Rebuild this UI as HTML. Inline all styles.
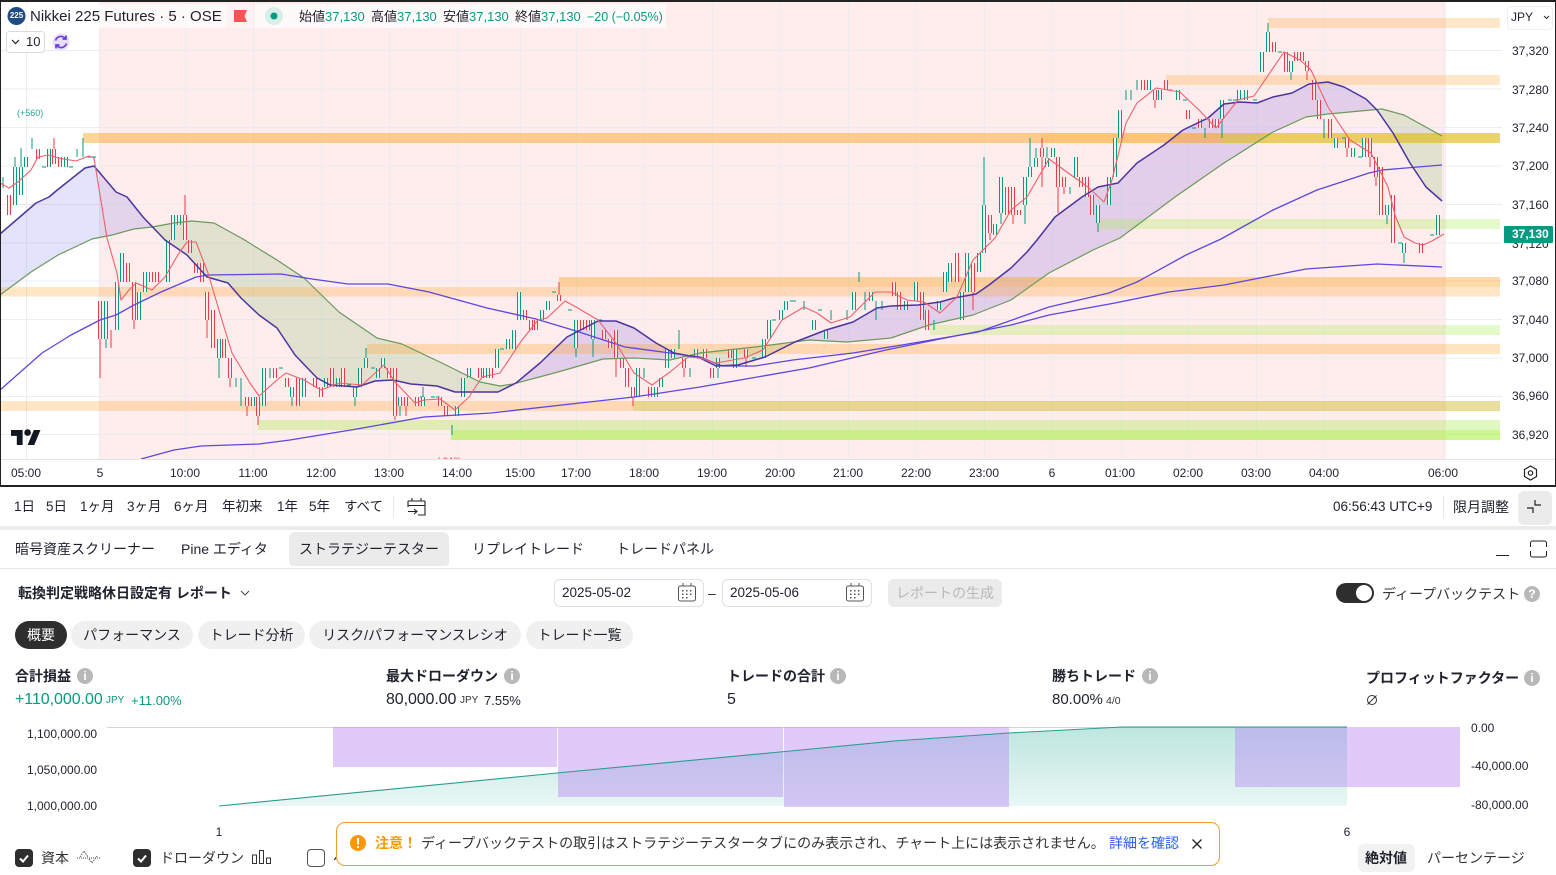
<!DOCTYPE html>
<html lang="ja"><head><meta charset="utf-8"><title>Nikkei 225 Futures</title>
<style>
html,body{margin:0;padding:0;background:#fff}
body{width:1556px;height:875px;overflow:hidden;position:relative;font-family:"Liberation Sans","Noto Sans CJK JP",sans-serif;color:#1e222d}
.t{position:absolute;white-space:nowrap;line-height:16px;height:16px}
.c{transform:translateX(-50%)}
.s14{font-size:14px}.s13{font-size:13px}.s12{font-size:12px}.s135{font-size:13.5px}
.g{color:#089981}
.b{font-weight:700}
.box{position:absolute;box-sizing:border-box}
.pill{position:absolute;top:621px;height:28px;border-radius:14px;background:#f0f0f0;font-size:14px;line-height:28px;text-align:center;white-space:nowrap}
.i{position:absolute;width:16px;height:16px;border-radius:50%;background:#b8b8b8;color:#fff;font-size:12px;line-height:16px;text-align:center;font-weight:700}
svg{position:absolute;overflow:visible}
</style></head><body>

<svg style="left:0;top:0" width="1556" height="487" viewBox="0 0 1556 487">
<defs>
<clipPath id="ch"><rect x="0" y="0" width="1556" height="459"/></clipPath>
<clipPath id="l1"><rect x="0" y="0" width="153" height="459"/></clipPath>
<clipPath id="l2"><rect x="515" y="0" width="175" height="459"/></clipPath>
<clipPath id="l3"><rect x="795" y="0" width="583" height="459"/></clipPath>
<clipPath id="k1"><rect x="153" y="0" width="362" height="459"/></clipPath>
<clipPath id="k2"><rect x="690" y="0" width="105" height="459"/></clipPath>
<clipPath id="k3"><rect x="1378" y="0" width="66" height="459"/></clipPath>
<polygon id="fa" points="0,234 36,203 49,197 56,191 85,168 94,166 116,192 127,197 143,217 165,240 187,255 207,277 228,283 241,298 259,315 277,328 295,355 317,378 330,385 357,387 375,381 393,380 411,384 437,386 455,392 498,392 516,383 540,363 567,337 598,321 616,321 634,328 656,343 674,353 700,358 716,366 738,365 765,357 795,342 826,330 853,322 877,308 891,306 918,305 940,302 954,298 976,294 989,285 1011,268 1027,252 1037,240 1055,217 1082,197 1098,187 1118,183 1137,163 1164,145 1183,130 1208,118 1224,104 1240,102 1257,103 1273,97 1292,93 1309,84 1328,82 1344,87 1366,99 1377,110 1393,133 1410,163 1426,187 1442,201 1442,136 1404,115 1382,109 1328,114 1306,117 1273,132 1224,163 1175,197 1120,238 1093,250 1049,273 1011,300 973,315 929,325 891,338 847,342 809,340 755,347 700,353 670,360 634,358 603,359 558,372 513,384 500,386 480,382 446,365 402,344 377,338 339,312 304,278 277,260 243,239 214,223 192,221 174,223 152,227 134,229 112,235 92,239 58,255 31,272 0,295"/>
<path id="rb" d="M9 195V215M38 149V159M54 149V164M60 157V167M100 301V339M128 263V282M134 282V320M151 272V282M157 272V282M185 215V240M190 240V253M196 263V273M202 263V282M207 292V320M213 310V348M224 339V358M230 358V378M247 397V406M258 397V416M275 368V378M287 378V387M298 378V406M315 378V387M321 387V397M332 368V387M343 368V387M389 368V378M395 368V416M406 397V406M417 397V406M440 397V406M446 406V416M480 368V378M491 368V378M525 310V320M531 320V330M536 320V330M559 295V301M582 320V330M588 320V330M604 330V339M610 339V348M616 330V358M622 358V368M627 368V387M633 387V397M650 387V397M684 358V368M705 349V358M712 368V378M730 349V358M746 349V358M894 282V296M899 292V310M922 292V320M927 310V330M957 253V282M973 263V292M990 215V233M1007 187V215M1013 187V215M1019 210V215M1042 148V157M1058 157V187M1064 177V187M1081 177V187M1087 177V197M1092 195V215M1143 80V90M1155 90V100M1166 80V90M1188 110V119M1200 119V128M1211 119V128M1217 119V128M1274 42V52M1286 52V72M1296 52V61M1302 52V61M1307 61V71M1314 80V100M1319 100V119M1330 119V138M1347 138V148M1370 138V157M1376 157V177M1381 167V215M1393 195V243M1421 243V253"/>
<path id="gb" d="M15 167V205M21 167V195M26 157V167M49 149V167M66 157V167M106 301V339M117 282V330M122 253V282M139 292V320M145 272V292M168 240V282M173 215V240M179 215V225M219 339V358M253 397V406M264 368V406M292 387V397M304 378V397M326 378V387M338 378V387M355 387V397M360 368V387M366 358V368M378 368V378M383 358V368M400 397V406M423 397V406M457 406V416M463 378V397M469 368V378M485 368V378M497 349V368M508 339V349M514 330V349M519 292V320M542 310V320M548 301V310M576 320V348M593 320V339M638 368V397M656 387V397M661 378V387M667 349V368M673 349V358M696 349V358M718 358V368M735 349V368M764 339V358M769 320V339M781 310V320M786 301V310M814 320V330M826 330V339M854 292V310M871 292V301M906 301V310M916 282V301M939 301V310M945 272V292M950 263V282M962 292V320M967 253V292M979 253V272M984 205V253M995 224V235M1001 177V213M1025 177V205M1030 167V177M1036 158V167M1047 158V167M1053 148V157M1076 157V177M1098 205V223M1109 177V205M1115 138V177M1120 110V138M1149 80V90M1160 90V100M1178 90V100M1222 100V119M1239 90V100M1246 90V100M1262 52V72M1268 32V52M1291 61V72M1336 138V148M1353 148V157M1364 138V157M1387 205V215M1404 243V253M1438 215V235"/>
</defs>

<!-- background -->
<rect x="0" y="0" width="1556" height="487" fill="#fff"/>
<rect x="99" y="2" width="1347" height="457" fill="#ffecec"/>

<!-- grid -->
<path d="M0 50.5H1502M0 89H1502M0 127.5H1502M0 166H1502M0 204.5H1502M0 243H1502M0 281H1502M0 319.5H1502M0 358H1502M0 396.5H1502M0 434.5H1502M26.5 2V459M99.5 2V459M185.5 2V459M253.5 2V459M321.5 2V459M389.5 2V459M457.5 2V459M520.5 2V459M576.5 2V459M644.5 2V459M712.5 2V459M780.5 2V459M848.5 2V459M916.5 2V459M984.5 2V459M1052.5 2V459M1121.5 2V459M1188.5 2V459M1256.5 2V459M1324.5 2V459M1443.5 2V459" stroke="#ecebf0" stroke-width="1" fill="none"/>

<!-- MA cloud -->
<use href="#fa" clip-path="url(#l1)" fill="#8c8cf0" fill-opacity=".24"/>
<use href="#fa" clip-path="url(#l2)" fill="#6c5ce0" fill-opacity=".2"/>
<use href="#fa" clip-path="url(#l3)" fill="#6c5ce0" fill-opacity=".2"/>
<use href="#fa" clip-path="url(#k1)" fill="#5daa50" fill-opacity=".18"/>
<use href="#fa" clip-path="url(#k2)" fill="#5daa50" fill-opacity=".18"/>
<use href="#fa" clip-path="url(#k3)" fill="#5daa50" fill-opacity=".18"/>

<!-- bands -->
<g>
<rect x="1268" y="18" width="232" height="10" fill="#ffa01e" fill-opacity=".24"/>
<rect x="1166" y="75" width="334" height="10" fill="#ffa01e" fill-opacity=".24"/>
<rect x="83" y="133" width="1417" height="10" fill="#ff9b0a" fill-opacity=".42"/>
<rect x="1041" y="133" width="459" height="10" fill="#ff9b0a" fill-opacity=".14"/>
<rect x="1222" y="133" width="278" height="10" fill="#b8e030" fill-opacity=".3"/>
<rect x="1098" y="219" width="402" height="10" fill="#aaeb50" fill-opacity=".3"/>
<rect x="559" y="277" width="941" height="10" fill="#ff9b0a" fill-opacity=".36"/>
<rect x="0" y="287" width="1500" height="9.500" fill="#ffa01e" fill-opacity=".26"/>
<rect x="930" y="325" width="570" height="10" fill="#aaeb50" fill-opacity=".3"/>
<rect x="367" y="344" width="1133" height="10" fill="#ffa01e" fill-opacity=".28"/>
<rect x="0" y="401" width="1500" height="10" fill="#ffa01e" fill-opacity=".26"/>
<rect x="633" y="401" width="867" height="10" fill="#aacc30" fill-opacity=".28"/>
<rect x="258" y="420" width="1242" height="10" fill="#aaeb50" fill-opacity=".35"/>
<rect x="451" y="430" width="1049" height="10" fill="#aaf046" fill-opacity=".6"/>
</g>

<g clip-path="url(#ch)">
<!-- candles -->
<path d="M54 138V149M100 339V378M111 330V348M134 320V329M185 195V215M207 320V338M230 378V387M247 406V416M258 416V425M395 416V420M406 406V416M559 282V295M616 358V377M633 397V406M684 368V377M746 358V367M973 292V310M990 233V240M1013 215V224M1042 138V148M1042 157V187M1058 187V213M1064 187V194M1155 100V108M1347 148V157M1370 157V167M1376 177V186M1307 71V80" stroke="#f0394a" stroke-width="1" fill="none"/>
<path d="M3 177V188M15 157V167M21 148V167M32 138V149M77 149V157M83 138V157M106 339V348M219 358V378M236 378V387M241 378V406M270 368V378M292 397V406M355 397V406M366 348V358M400 406V416M423 387V397M452 425V435M576 348V357M593 339V357M644 368V378M679 330V349M690 368V377M718 368V378M804 301V310M831 310V320M847 310V320M859 272V282M865 292V310M876 301V320M882 301V310M934 320V330M984 157V205M1001 213V224M1025 205V224M1030 138V167M1036 148V158M1047 147V158M1070 187V194M1098 223V232M1126 90V100M1131 90V100M1137 80V90M1205 128V138M1222 119V138M1268 23V32M1291 72V80M1324 119V138M1387 215V224M1404 253V263M42 167h4M69 167h4M87 157h4M92 157h4M279 368h4M347 385h4M371 368h4M420 397h4M431 397h4M436 397h4M500 349h4M552 292h4M568 310h4M598 320h4M752 358h4M772 320h4M790 301h4M792 301h4M818 310h4M1168 90h4M1183 100h4M1192 128h4M1228 100h4M1233 100h4M1253 100h4M1278 52h4M1342 138h4M1358 157h4M1398 243h4M1430 235h4" stroke="#089981" stroke-width="1" fill="none"/>
<use href="#rb" stroke="#f0394a" stroke-width="4" fill="none"/>
<use href="#rb" stroke="#ffecec" stroke-width="2" fill="none"/>
<use href="#gb" stroke="#089981" stroke-width="4" fill="none"/>
<use href="#gb" stroke="#f4f4ee" stroke-width="2" fill="none"/>

<!-- lines -->
<polyline fill="none" stroke="#6a9a5c" stroke-width="1.2" stroke-linejoin="round" points="0,295 31,272 58,255 92,239 112,235 134,229 152,227 174,223 192,221 214,223 243,239 277,260 304,278 339,312 377,338 402,344 446,365 480,382 500,386 513,384 558,372 603,359 634,358 670,360 700,353 755,347 809,340 847,342 891,338 929,325 973,315 1011,300 1049,273 1093,250 1120,238 1175,197 1224,163 1273,132 1306,117 1328,114 1382,109 1404,115 1442,136"/>
<polyline fill="none" stroke="#5c47e0" stroke-width="1.3" stroke-linejoin="round" points="0,390 42,353 71,335 100,320 116,315 134,305 161,292 196,277 208,275 281,274 312,279 348,284 388,284 429,292 487,308 536,319 576,331 625,347 670,353 700,357 722,366 755,366 793,360 853,353 902,345 978,332 1049,307 1109,293 1137,282 1186,255 1221,239 1273,210 1317,190 1369,173 1382,170 1442,165"/>
<polyline fill="none" stroke="#5c47e0" stroke-width="1.3" stroke-linejoin="round" points="141,459 174,450 201,446 259,444 290,440 357,429 424,417 491,413 580,403 634,397 700,387 809,368 886,350 940,339 1011,325 1049,315 1115,303 1169,292 1224,285 1306,269 1377,264 1442,267"/>
<polyline fill="none" stroke="#4a35a0" stroke-width="1.5" stroke-linejoin="round" points="0,234 36,203 49,197 56,191 85,168 94,166 116,192 127,197 143,217 165,240 187,255 207,277 228,283 241,298 259,315 277,328 295,355 317,378 330,385 357,387 375,381 393,380 411,384 437,386 455,392 498,392 516,383 540,363 567,337 598,321 616,321 634,328 656,343 674,353 700,358 716,366 738,365 765,357 795,342 826,330 853,322 877,308 891,306 918,305 940,302 954,298 976,294 989,285 1011,268 1027,252 1037,240 1055,217 1082,197 1098,187 1118,183 1137,163 1164,145 1183,130 1208,118 1224,104 1240,102 1257,103 1273,97 1292,93 1309,84 1328,82 1344,87 1366,99 1377,110 1393,133 1410,163 1426,187 1442,201"/>
<polyline fill="none" stroke="#f0606a" stroke-width="1.1" stroke-linejoin="round" points="0,183 9,188 18,182 31,170 38,157 49,155 58,158 76,161 89,156 94,158 107,238 117,273 121,300 129,290 136,283 152,290 165,277 179,253 187,242 196,242 208,273 221,317 232,353 250,383 259,396 277,380 286,373 304,380 321,390 339,383 362,385 384,365 395,382 415,403 424,400 440,399 455,410 469,397 482,377 500,373 522,340 538,320 547,318 565,301 576,307 598,320 616,343 634,373 652,385 670,372 688,357 700,358 716,363 744,358 763,350 782,320 804,307 817,313 831,323 850,317 875,292 891,292 907,300 924,302 940,313 957,297 973,260 995,238 1011,210 1027,197 1049,159 1071,175 1088,187 1104,202 1112,180 1126,123 1137,103 1156,88 1180,92 1199,110 1216,128 1238,100 1254,96 1284,52 1300,60 1311,70 1328,107 1350,140 1371,153 1388,187 1395,215 1404,237 1415,243 1423,245 1432,241 1444,234"/>
<text x="437" y="464" font-size="9" fill="#f0394a" font-family="Liberation Sans">(-340)</text>
</g>
<rect x="0" y="459" width="1502" height="1" fill="#e0e3eb"/>
<rect x="1447" y="459" width="109" height="1" fill="#e0e3eb"/>

<!-- TV logo -->
<g transform="translate(11,426.700) scale(.83)" fill="#131722"><path d="M14 22H7V11H0V4h14v18zM28 22h-8l7.500-18h8L28 22z"/><circle cx="20" cy="7" r="4"/></g>

<!-- frame -->
<rect x="0" y="0" width="1556" height="2" fill="#222"/>
<rect x="0" y="0" width="1" height="487" fill="#222"/>
<rect x="1555" y="0" width="1" height="487" fill="#222"/>
<rect x="0" y="485" width="1556" height="2" fill="#222"/>

<!-- legend backgrounds -->
<rect x="2" y="4" width="224" height="24" fill="#fff" fill-opacity=".72"/>
<rect x="226" y="4" width="28" height="24" fill="#fff" fill-opacity=".35"/>
<rect x="255" y="4" width="411" height="24" fill="#fff" fill-opacity=".72"/>
<circle cx="16.500" cy="16" r="9" fill="#1e4d84"/>
<path d="M234 10H247L244.500 16L247 22H234Z" fill="#ff5252"/>
<circle cx="274" cy="16" r="9" fill="#d8efe8"/>
<circle cx="274" cy="16" r="3.500" fill="#089981"/>
<rect x="6.500" y="31.500" width="38" height="21" rx="3" fill="#fff" stroke="#dcdcdc"/>
<path d="M12 40l3.500 3.500L19 40" fill="none" stroke="#222" stroke-width="1.200"/>
<circle cx="61" cy="42" r="8.500" fill="#e8e0fb"/>
<path d="M55.500 40.500a5.700 5.700 0 0 1 9.800-2M66.500 43.500a5.700 5.700 0 0 1-9.800 2M66 35.500v3.500h-3.500M56 48.500v-3.500h3.500" fill="none" stroke="#6a3fe0" stroke-width="1.700"/>
<rect x="1507.500" y="6.500" width="45" height="23" rx="4" fill="#fff" stroke="#eeeeee"/>
<path d="M1544 16l2.500 2.500 2.500-2.500" fill="none" stroke="#333" stroke-width="1.100"/>
<rect x="1504" y="226" width="49" height="17" rx="1" fill="#089981"/>
<path d="M1530.500 466l6 3.500v7l-6 3.500-6-3.500v-7z" fill="none" stroke="#222" stroke-width="1.200"/>
<circle cx="1530.500" cy="473" r="2.200" fill="none" stroke="#222" stroke-width="1.200"/>

<!-- toolbar icons -->
<path d="M408 501h17M408 501v6M425 501v14h-7M412 498v3M421 498v3M408 505.500h17M408 511.500h9M414 509l3 2.500-3 2.500" fill="none" stroke="#222" stroke-width="1.100"/>
</svg>

<div class="t c" style="left:16.500px;top:8px;font-size:8px;color:#fff;font-weight:700">225</div>
<div class="t" style="left:30px;top:8.500px;font-size:15px">Nikkei 225 Futures · 5 · OSE</div>
<div class="t s13" style="left:299px;top:9px">始値<span class="g">37,130</span></div>
<div class="t s13" style="left:371px;top:9px">高値<span class="g">37,130</span></div>
<div class="t s13" style="left:443px;top:9px">安値<span class="g">37,130</span></div>
<div class="t s13" style="left:515px;top:9px">終値<span class="g">37,130</span></div>
<div class="t g" style="left:587px;top:9px;font-size:12.500px">−20 (−0.05%)</div>
<div class="t s13" style="left:26px;top:34px">10</div>
<div class="t" style="left:17px;top:105px;font-size:9px;color:#26a69a">(+560)</div>
<div class="t s12" style="left:1511px;top:9px">JPY</div>

<!-- price axis -->
<div class="t s12" style="left:1512px;top:43px">37,320</div>
<div class="t s12" style="left:1512px;top:82px">37,280</div>
<div class="t s12" style="left:1512px;top:120px">37,240</div>
<div class="t s12" style="left:1512px;top:158px">37,200</div>
<div class="t s12" style="left:1512px;top:197px">37,160</div>
<div class="t s12" style="left:1512px;top:236px;z-index:0;height:8px;overflow:hidden;margin-top:7px;line-height:2px">37,120</div>
<div class="t s12 b" style="left:1512px;top:226px;color:#fff">37,130</div>
<div class="t s12" style="left:1512px;top:273px">37,080</div>
<div class="t s12" style="left:1512px;top:312px">37,040</div>
<div class="t s12" style="left:1512px;top:350px">37,000</div>
<div class="t s12" style="left:1512px;top:388px">36,960</div>
<div class="t s12" style="left:1512px;top:427px">36,920</div>

<!-- time axis -->
<div class="t s12 c" style="left:26px;top:465px">05:00</div>
<div class="t s12 c" style="left:100px;top:465px">5</div>
<div class="t s12 c" style="left:185px;top:465px">10:00</div>
<div class="t s12 c" style="left:253px;top:465px">11:00</div>
<div class="t s12 c" style="left:321px;top:465px">12:00</div>
<div class="t s12 c" style="left:389px;top:465px">13:00</div>
<div class="t s12 c" style="left:457px;top:465px">14:00</div>
<div class="t s12 c" style="left:520px;top:465px">15:00</div>
<div class="t s12 c" style="left:576px;top:465px">17:00</div>
<div class="t s12 c" style="left:644px;top:465px">18:00</div>
<div class="t s12 c" style="left:712px;top:465px">19:00</div>
<div class="t s12 c" style="left:780px;top:465px">20:00</div>
<div class="t s12 c" style="left:848px;top:465px">21:00</div>
<div class="t s12 c" style="left:916px;top:465px">22:00</div>
<div class="t s12 c" style="left:984px;top:465px">23:00</div>
<div class="t s12 c" style="left:1052px;top:465px">6</div>
<div class="t s12 c" style="left:1120px;top:465px">01:00</div>
<div class="t s12 c" style="left:1188px;top:465px">02:00</div>
<div class="t s12 c" style="left:1256px;top:465px">03:00</div>
<div class="t s12 c" style="left:1324px;top:465px">04:00</div>
<div class="t s12 c" style="left:1443px;top:465px">06:00</div>

<!-- range bar -->
<div class="t s135" style="left:14px;top:499px">1日</div>
<div class="t s135" style="left:46px;top:499px">5日</div>
<div class="t s135" style="left:80px;top:499px">1ヶ月</div>
<div class="t s135" style="left:127px;top:499px">3ヶ月</div>
<div class="t s135" style="left:174px;top:499px">6ヶ月</div>
<div class="t s135" style="left:222px;top:499px">年初来</div>
<div class="t s135" style="left:277px;top:499px">1年</div>
<div class="t s135" style="left:309px;top:499px">5年</div>
<div class="t s135" style="left:344px;top:499px">すべて</div>
<div class="box" style="left:393px;top:496px;width:1px;height:22px;background:#e6e6e6"></div>
<div class="t s135" style="left:1333px;top:499px">06:56:43 UTC+9</div>
<div class="box" style="left:1443px;top:496px;width:1px;height:22px;background:#e6e6e6"></div>
<div class="t s14" style="left:1453px;top:499px">限月調整</div>
<div class="box" style="left:1518px;top:491px;width:34px;height:34px;background:#ebebeb;border-radius:6px"></div>
<svg style="left:1518px;top:491px" width="34" height="34"><path d="M17 9v5h6M9 17h6v5" fill="none" stroke="#222" stroke-width="1.200"/></svg>
<div class="box" style="left:0;top:526px;width:1556px;height:4px;background:#ebebeb"></div>

<!-- tabs -->
<div class="box" style="left:289px;top:532px;width:160px;height:34px;background:#ebebeb;border-radius:6px 6px 4px 4px"></div>
<div class="t s14" style="left:15px;top:541px">暗号資産スクリーナー</div>
<div class="t s14" style="left:181px;top:541px">Pine エディタ</div>
<div class="t s14" style="left:299px;top:541px">ストラテジーテスター</div>
<div class="t s14" style="left:472px;top:541px">リプレイトレード</div>
<div class="t s14" style="left:616px;top:541px">トレードパネル</div>
<div class="box" style="left:0;top:568px;width:1556px;height:1px;background:#e6e6e6"></div>
<svg style="left:1490px;top:536px" width="60" height="26"><path d="M6 19.500h13" stroke="#222" stroke-width="1" fill="none"/><path d="M40.500 11V7a2 2 0 0 1 2-2h12a2 2 0 0 1 2 2v4M40.500 15v4a2 2 0 0 0 2 2h12a2 2 0 0 0 2-2v-4" stroke="#222" stroke-width="1" fill="none"/></svg>

<!-- report row -->
<div class="t s14 b" style="left:18px;top:585px">転換判定戦略休日設定有 レポート</div>
<svg style="left:240px;top:589px" width="10" height="8"><path d="M1 2l4 4 4-4" fill="none" stroke="#444" stroke-width="1"/></svg>
<div class="box" style="left:554px;top:579px;width:150px;height:28px;border:1px solid #e0e0e0;border-radius:6px"></div>
<div class="t s135" style="left:562px;top:585px">2025-05-02</div>
<div class="t s14" style="left:708px;top:585px">–</div>
<div class="box" style="left:722px;top:579px;width:150px;height:28px;border:1px solid #e0e0e0;border-radius:6px"></div>
<div class="t s135" style="left:730px;top:585px">2025-05-06</div>
<svg style="left:678px;top:583px" width="20" height="20"><g fill="none" stroke="#555" stroke-width="1"><rect x=".5" y="3" width="17" height="15" rx="2"/><path d="M5 0v3M13 0v3"/></g><g fill="#555"><rect x="4" y="7" width="1.500" height="1.500"/><rect x="8" y="7" width="1.500" height="1.500"/><rect x="12" y="7" width="1.500" height="1.500"/><rect x="4" y="10.500" width="1.500" height="1.500"/><rect x="8" y="10.500" width="1.500" height="1.500"/><rect x="12" y="10.500" width="1.500" height="1.500"/><rect x="4" y="14" width="1.500" height="1.500"/><rect x="8" y="14" width="1.500" height="1.500"/></g></svg>
<svg style="left:846px;top:583px" width="20" height="20"><g fill="none" stroke="#555" stroke-width="1"><rect x=".5" y="3" width="17" height="15" rx="2"/><path d="M5 0v3M13 0v3"/></g><g fill="#555"><rect x="4" y="7" width="1.500" height="1.500"/><rect x="8" y="7" width="1.500" height="1.500"/><rect x="12" y="7" width="1.500" height="1.500"/><rect x="4" y="10.500" width="1.500" height="1.500"/><rect x="8" y="10.500" width="1.500" height="1.500"/><rect x="12" y="10.500" width="1.500" height="1.500"/><rect x="4" y="14" width="1.500" height="1.500"/><rect x="8" y="14" width="1.500" height="1.500"/></g></svg>
<div class="box" style="left:888px;top:579px;width:114px;height:28px;background:#ebebeb;border-radius:6px;color:#b8b8b8;font-size:14px;line-height:28px;text-align:center">レポートの生成</div>
<div class="box" style="left:1336px;top:583px;width:38px;height:20px;background:#2e2e2e;border-radius:10px"></div>
<div class="box" style="left:1356px;top:585px;width:16px;height:16px;background:#fff;border-radius:50%"></div>
<div class="t s14" style="left:1382px;top:586px;color:#333">ディープバックテスト</div>
<div class="i" style="left:1524px;top:586px">?</div>

<!-- pills -->
<div class="pill" style="left:15px;width:52px;background:#2e2e2e;color:#fff">概要</div>
<div class="pill" style="left:71px;width:122px">パフォーマンス</div>
<div class="pill" style="left:198px;width:107px">トレード分析</div>
<div class="pill" style="left:309px;width:212px">リスク/パフォーマンスレシオ</div>
<div class="pill" style="left:526px;width:107px">トレード一覧</div>

<!-- metrics -->
<div class="t s14 b" style="left:15px;top:668px">合計損益</div><div class="i" style="left:77px;top:668px">i</div>
<div class="t s14 b" style="left:386px;top:668px">最大ドローダウン</div><div class="i" style="left:504px;top:668px">i</div>
<div class="t s14 b" style="left:727px;top:668px">トレードの合計</div><div class="i" style="left:830px;top:668px">i</div>
<div class="t s14 b" style="left:1052px;top:668px">勝ちトレード</div><div class="i" style="left:1142px;top:668px">i</div>
<div class="t s14 b" style="left:1366px;top:670px">プロフィットファクター</div><div class="i" style="left:1524px;top:670px">i</div>

<div class="t g" style="left:15px;top:692px;font-size:16px;letter-spacing:-.05px">+110,000.00</div>
<div class="t g" style="left:106px;top:693px;font-size:10px">JPY</div>
<div class="t s13 g" style="left:131px;top:693px">+11.00%</div>
<div class="t" style="left:386px;top:692px;font-size:16px;letter-spacing:-.1px">80,000.00</div>
<div class="t" style="left:460px;top:693px;font-size:10px;color:#333">JPY</div>
<div class="t s13" style="left:484px;top:693px">7.55%</div>
<div class="t" style="left:727px;top:692px;font-size:16px">5</div>
<div class="t" style="left:1052px;top:692px;font-size:15px">80.00%</div>
<div class="t" style="left:1106px;top:693px;font-size:10.500px;color:#333">4/0</div>
<svg style="left:1366px;top:694px" width="12" height="12"><circle cx="6" cy="6" r="4.500" fill="none" stroke="#333" stroke-width="1"/><path d="M1.500 10.500L10.500 1.500" stroke="#333" stroke-width="1"/></svg>

<!-- report chart -->
<svg style="left:0;top:700px" width="1556" height="130" viewBox="0 700 1556 130">
<defs><linearGradient id="eq" x1="0" y1="727" x2="0" y2="806" gradientUnits="userSpaceOnUse"><stop offset="0" stop-color="#22ab94" stop-opacity=".3"/><stop offset="1" stop-color="#22ab94" stop-opacity=".1"/></linearGradient></defs>
<rect x="107" y="727" width="1240" height="1" fill="#d9d0e0"/>
<polygon points="219,806 557,773 780,752 894,741 1009,733 1122,727 1347,727 1347,806" fill="url(#eq)"/>
<g fill="#b98af5" fill-opacity=".45">
<rect x="333" y="727" width="224" height="40"/>
<rect x="558" y="727" width="225" height="70"/>
<rect x="784" y="727" width="225" height="80"/>
<rect x="1235" y="727" width="225" height="60"/>
</g>
<polyline points="219,806 557,773 780,752 894,741 1009,733 1122,727 1347,727" fill="none" stroke="#2a9d90" stroke-width="1.100"/>
</svg>
<div class="t s12" style="left:27px;top:726px">1,100,000.00</div>
<div class="t s12" style="left:27px;top:762px">1,050,000.00</div>
<div class="t s12" style="left:27px;top:798px">1,000,000.00</div>
<div class="t s12" style="left:1471px;top:720px">0.00</div>
<div class="t s12" style="left:1471px;top:758px">-40,000.00</div>
<div class="t s12" style="left:1471px;top:797px">-80,000.00</div>
<div class="t s12 c" style="left:219px;top:824px">1</div>
<div class="t s12 c" style="left:1347px;top:824px">6</div>

<!-- legend checkboxes -->
<div class="box" style="left:15px;top:849px;width:18px;height:18px;background:#2e2e2e;border-radius:4px"></div>
<svg style="left:15px;top:849px" width="18" height="18"><path d="M5 9.500l3 3 5-6" fill="none" stroke="#fff" stroke-width="2"/></svg>
<div class="t s14" style="left:41px;top:850px;color:#333">資本</div>
<svg style="left:76px;top:848px" width="26" height="16"><path d="M1 10h23" stroke="#555" stroke-width="1" stroke-dasharray="1 1" fill="none"/><path d="M4 9l4-6 4 6M13 11l3 4 3-4 2-3" stroke="#555" stroke-width="1" stroke-dasharray="1.500 1" fill="none"/></svg>
<div class="box" style="left:133px;top:849px;width:18px;height:18px;background:#2e2e2e;border-radius:4px"></div>
<svg style="left:133px;top:849px" width="18" height="18"><path d="M5 9.500l3 3 5-6" fill="none" stroke="#fff" stroke-width="2"/></svg>
<div class="t s14" style="left:160px;top:850px;color:#333">ドローダウン</div>
<svg style="left:252px;top:850px" width="21" height="15"><g fill="none" stroke="#333" stroke-width="1"><rect x=".5" y="5" width="4" height="8.500"/><rect x="7.500" y=".5" width="4" height="13"/><rect x="14.500" y="8" width="4" height="5.500"/></g></svg>
<div class="box" style="left:307px;top:849px;width:18px;height:18px;border:1px solid #555;border-radius:4px;background:#fff"></div>
<div class="t s14" style="left:333px;top:850px;color:#333">ベ</div>

<!-- notice -->
<div class="box" style="left:336px;top:822px;width:884px;height:44px;background:#fff;border:1px solid #ec9e2d;border-radius:9px"></div>
<svg style="left:350px;top:835px" width="16" height="16"><circle cx="8" cy="8" r="8" fill="#ff9800"/><rect x="7" y="3" width="2" height="6.500" fill="#fff"/><rect x="7" y="11" width="2" height="2" fill="#fff"/></svg>
<div class="t s14 b" style="left:375px;top:835px;color:#ff9800">注意！</div>
<div class="t s14" style="left:421px;top:835px;color:#333">ディープバックテストの取引はストラテジーテスタータブにのみ表示され、チャート上には表示されません。</div>
<div class="t s14" style="left:1109px;top:835px;color:#2962ff">詳細を確認</div>
<svg style="left:1191px;top:838px" width="12" height="12"><path d="M1.500 1.500l9 9M10.500 1.500l-9 9" stroke="#222" stroke-width="1.300" fill="none"/></svg>

<div class="box" style="left:1358px;top:844px;width:57px;height:28px;background:#f2f2f2;border-radius:6px"></div>
<div class="t s14 b" style="left:1365px;top:850px">絶対値</div>
<div class="t s14" style="left:1427px;top:850px;color:#333">パーセンテージ</div>

</body></html>
